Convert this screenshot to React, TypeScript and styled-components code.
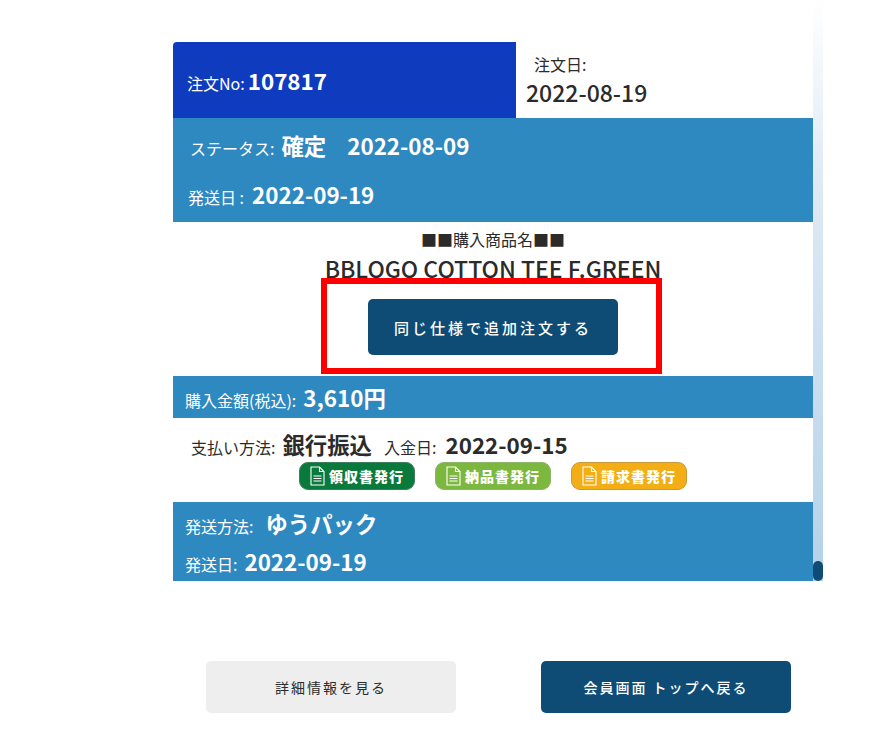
import React, { FC } from "react";
import styled, { createGlobalStyle } from "styled-components";

const COLORS = {
  royal: "#0f3bbf",
  blue: "#2e89c1",
  navy: "#0f4c75",
  ink: "#2b2b2b",
  grey: "#eeeeee",
};

const GlobalStyle = createGlobalStyle`
  html, body {
    margin: 0;
    padding: 0;
    background: #fff;
    overflow: hidden;
    font-family: "Noto Sans CJK JP", "Noto Sans", sans-serif;
    color: ${COLORS.ink};
  }
`;

const Page = styled.div`
  width: 875px;
  height: 739px;
  padding: 42px 0 0 173px;
  box-sizing: border-box;
`;

const ScrollArea = styled.div`
  display: flex;
  width: 650px;
  height: 539px;
`;

const Card = styled.div`
  width: 640px;
  display: flex;
  flex-direction: column;
`;

const Track = styled.div`
  position: relative;
  width: 10px;
  margin-top: -42px;
  background: linear-gradient(to bottom, #ffffff 0%, #dfeaf5 30%, #b4d1e8 100%);
`;

const Thumb = styled.div`
  position: absolute;
  left: 0;
  bottom: 0;
  width: 10px;
  height: 20px;
  border-radius: 5px;
  background: ${COLORS.navy};
`;

const HeaderRow = styled.div`
  display: flex;
  height: 76px;
`;

const OrderNo = styled.div`
  width: 343px;
  box-sizing: border-box;
  padding: 20px 0 0 14px;
  background: ${COLORS.royal};
  border-radius: 4px 0 0 0;
  color: #fff;
  line-height: 36px;
  white-space: nowrap;
`;

const OrderDate = styled.div`
  display: flex;
  flex-direction: column;
  padding: 10px 0 0 10px;
`;

const DateLabel = styled.span`
  font-size: 16px;
  line-height: 24px;
  padding-left: 8px;
`;

const DateValue = styled.span`
  font-size: 23px;
  font-weight: 500;
  line-height: 32px;
`;

const Label = styled.span<{ $gap?: number; $lead?: number }>`
  font-size: 16px;
  margin-left: ${(p) => p.$lead ?? 0}px;
  margin-right: ${(p) => p.$gap ?? 0}px;
`;

const Value = styled.span<{ $lead?: number }>`
  font-size: 22.4px;
  font-weight: 700;
  margin-left: ${(p) => p.$lead ?? 0}px;
`;

const StatusBand = styled.div`
  height: 104px;
  background: ${COLORS.blue};
  color: #fff;
  box-sizing: border-box;
  padding-top: 8px;
`;

const BandLine = styled.div<{ $indent: number; $height: number }>`
  padding-left: ${(p) => p.$indent}px;
  line-height: ${(p) => p.$height}px;
  height: ${(p) => p.$height}px;
  white-space: pre;
`;

const Product = styled.div`
  height: 154px;
  display: flex;
  flex-direction: column;
  align-items: center;
  padding: 6px 0 0 0;
  box-sizing: border-box;
`;

const ProductCaption = styled.div`
  font-size: 16px;
  line-height: 22px;
  text-align: center;
`;

const ProductName = styled.div`
  font-size: 23px;
  font-weight: 500;
  line-height: 28px;
  margin-top: 4px;
  white-space: nowrap;
`;

const Highlight = styled.div`
  width: 341px;
  height: 96px;
  box-sizing: border-box;
  border: 6px solid #ff0000;
  margin: -4px 0 0 -3px;
  padding: 2px 0 0 3px;
  display: flex;
  align-items: center;
  justify-content: center;
`;

const ActionButton = styled.button<{
  $tone: "navy" | "grey";
  $h: number;
  $size: number;
  $spacing: number;
}>`
  width: 250px;
  height: ${(p) => p.$h}px;
  border: 0;
  border-radius: 5px;
  padding: 0;
  font-family: inherit;
  font-size: ${(p) => p.$size}px;
  letter-spacing: ${(p) => p.$spacing}px;
  font-weight: ${(p) => (p.$tone === "navy" ? 500 : 400)};
  background: ${(p) => (p.$tone === "navy" ? COLORS.navy : COLORS.grey)};
  color: ${(p) => (p.$tone === "navy" ? "#fff" : COLORS.ink)};
`;

const AmountBand = styled.div`
  height: 42px;
  background: ${COLORS.blue};
  color: #fff;
  padding-left: 12px;
  line-height: 42px;
`;

const Payment = styled.div`
  height: 84px;
  box-sizing: border-box;
  padding-top: 10px;
`;

const PaymentLine = styled.div`
  display: flex;
  align-items: baseline;
  padding-left: 18px;
  height: 34px;
  line-height: 32px;
  white-space: nowrap;
`;

const Badges = styled.div`
  display: flex;
  gap: 20px;
  padding-left: 126px;
`;

const Badge = styled.div<{ $bg: string; $edge: string }>`
  display: flex;
  align-items: center;
  justify-content: center;
  gap: 4px;
  width: 116px;
  height: 28px;
  box-sizing: border-box;
  border: 1px solid ${(p) => p.$edge};
  border-radius: 9px;
  background: ${(p) => p.$bg};
  color: #fff;
  font-size: 14px;
  font-weight: 900;
  letter-spacing: 1px;
`;

const ShippingBand = styled.div`
  height: 79px;
  background: ${COLORS.blue};
  color: #fff;
  box-sizing: border-box;
  padding-top: 2px;
`;

const Footer = styled.div`
  display: flex;
  gap: 85px;
  margin-top: 80px;
  padding-left: 33px;
`;

const DocIcon: FC = () => (
  <svg width="15" height="20" viewBox="0 0 15 20" fill="none" stroke="#fff" strokeWidth="1.1">
    <path d="M1 1h8.5L14 5.5V19H1z" />
    <path d="M9.5 1v4.5H14" />
    <path d="M3.5 10h8M3.5 12.5h8M3.5 15h8" />
  </svg>
);

const badges = [
  { text: "領収書発行", bg: "#0a7a3c", edge: "#3d7f5c" },
  { text: "納品書発行", bg: "#7cb83f", edge: "#8db56a" },
  { text: "請求書発行", bg: "#f2ae14", edge: "#c79a3c" },
];

const App: FC = () => (
  <Page>
    <GlobalStyle />
    <ScrollArea>
      <Card>
        <HeaderRow>
          <OrderNo>
            <Label $gap={3}>注文No:</Label>
            <Value>107817</Value>
          </OrderNo>
          <OrderDate>
            <DateLabel>注文日:</DateLabel>
            <DateValue>2022-08-19</DateValue>
          </OrderDate>
        </HeaderRow>
        <StatusBand>
          <BandLine $indent={17} $height={38}>
            <Label $gap={7}>ステータス:</Label>
            <Value>確定</Value>
            <Value $lead={21}>2022-08-09</Value>
          </BandLine>
          <BandLine $indent={15} $height={60}>
            <Label $gap={8}>発送日 :</Label>
            <Value>2022-09-19</Value>
          </BandLine>
        </StatusBand>
        <Product>
          <ProductCaption>■■購入商品名■■</ProductCaption>
          <ProductName>BBLOGO COTTON TEE F.GREEN</ProductName>
          <Highlight>
            <ActionButton $tone="navy" $h={56} $size={15} $spacing={3}>
              同じ仕様で追加注文する
            </ActionButton>
          </Highlight>
        </Product>
        <AmountBand>
          <Label $gap={7}>購入金額(税込):</Label>
          <Value>3,610円</Value>
        </AmountBand>
        <Payment>
          <PaymentLine>
            <Label $gap={7}>支払い方法:</Label>
            <Value>銀行振込</Value>
            <Label $lead={12} $gap={9}>入金日:</Label>
            <Value>2022-09-15</Value>
          </PaymentLine>
          <Badges>
            {badges.map((b) => (
              <Badge key={b.text} $bg={b.bg} $edge={b.edge}>
                <DocIcon />
                {b.text}
              </Badge>
            ))}
          </Badges>
        </Payment>
        <ShippingBand>
          <BandLine $indent={12} $height={38}>
            <Label $gap={12}>発送方法:</Label>
            <Value>ゆうパック</Value>
          </BandLine>
          <BandLine $indent={12} $height={38}>
            <Label $gap={7}>発送日:</Label>
            <Value>2022-09-19</Value>
          </BandLine>
        </ShippingBand>
      </Card>
      <Track>
        <Thumb />
      </Track>
    </ScrollArea>
    <Footer>
      <ActionButton $tone="grey" $h={52} $size={14} $spacing={2}>
        詳細情報を見る
      </ActionButton>
      <ActionButton $tone="navy" $h={52} $size={14} $spacing={2}>
        会員画面 トップへ戻る
      </ActionButton>
    </Footer>
  </Page>
);

export default App;
